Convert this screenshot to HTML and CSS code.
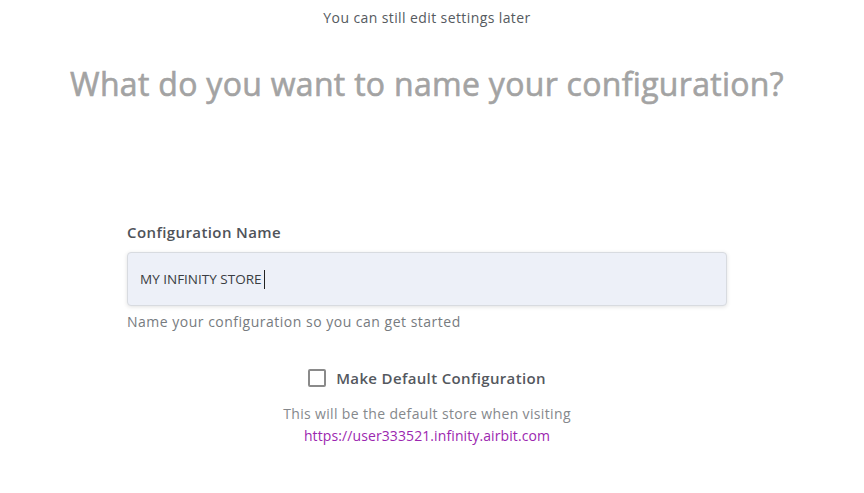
FILE: index.html
```html
<!DOCTYPE html>
<html lang="en">
<head>
  <meta charset="UTF-8" />
  <meta name="viewport" content="width=device-width, initial-scale=1.0"/>
  <title>Name your configuration</title>
  <link rel="stylesheet" href="styles.css">
</head>
<body>
  <div class="page">
    <p class="subtitle">You can still edit settings later</p>
    <h1>What do you want to name your configuration?</h1>

    <div class="form">
      <label class="field-label" for="config-name">Configuration Name</label>
      <div class="field">
        <span class="field-value">MY INFINITY STORE</span><span class="caret"></span>
      </div>
      <p class="hint">Name your configuration so you can get started</p>

      <div class="default">
        <label class="check">
          <span class="box"></span>
          Make Default Configuration
        </label>
        <p class="note">This will be the default store when visiting</p>
        <a class="link" href="#">https://user333521.infinity.airbit.com</a>
      </div>
    </div>
  </div>
</body>
</html>
```

FILE: styles.css
```css
body {
  margin: 0;
  background: #ffffff;
  font-family: "Open Sans", Arial, sans-serif;
  color: #555;
}

.page {
  width: 854px;
  padding-top: 8px;
}

.subtitle {
  margin: 0;
  text-align: center;
  font-size: 14px;
  line-height: 20px;
  letter-spacing: 0.4px;
  color: #555a60;
}

h1 {
  margin: 36px 0 0;
  text-align: center;
  font-size: 32px;
  line-height: 40px;
  font-weight: 400;
  letter-spacing: 0.3px;
  color: #a3a3a3;
  -webkit-text-stroke: 0.6px #a3a3a3;
}

.form {
  width: 600px;
  margin: 118px auto 0;
}

.field-label {
  display: block;
  font-size: 15px;
  line-height: 20px;
  font-weight: 600;
  letter-spacing: 0.4px;
  color: #4f5359;
}

.field {
  display: flex;
  align-items: center;
  height: 52px;
  margin-top: 10px;
  padding: 0 12px;
  background: #edf0f8;
  border: 1px solid #d8dbe0;
  border-radius: 4px;
  box-shadow: 0 1px 4px rgba(0, 0, 0, 0.12);
}

.field-value {
  font-size: 13.5px;
  color: #3a3d42;
}

.caret {
  display: inline-block;
  width: 1px;
  height: 19px;
  margin-left: 3px;
  background: #222;
}

.hint {
  margin: 6px 0 0;
  font-size: 14px;
  line-height: 20px;
  letter-spacing: 0.5px;
  color: #777b80;
}

.default {
  margin-top: 36px;
  text-align: center;
}

.check {
  display: inline-flex;
  align-items: center;
  gap: 10px;
  font-size: 15px;
  line-height: 20px;
  font-weight: 600;
  letter-spacing: 0.35px;
  color: #54585e;
}

.box {
  width: 14px;
  height: 14px;
  border: 2px solid #8a8a8a;
  border-radius: 2px;
}

.note {
  margin: 12px 0 0;
  font-size: 14px;
  line-height: 20px;
  letter-spacing: 0.35px;
  color: #85888c;
}

.link {
  display: inline-block;
  margin-top: 2px;
  font-size: 14px;
  line-height: 20px;
  letter-spacing: 0.1px;
  color: #9c27b0;
  text-decoration: none;
}
```
